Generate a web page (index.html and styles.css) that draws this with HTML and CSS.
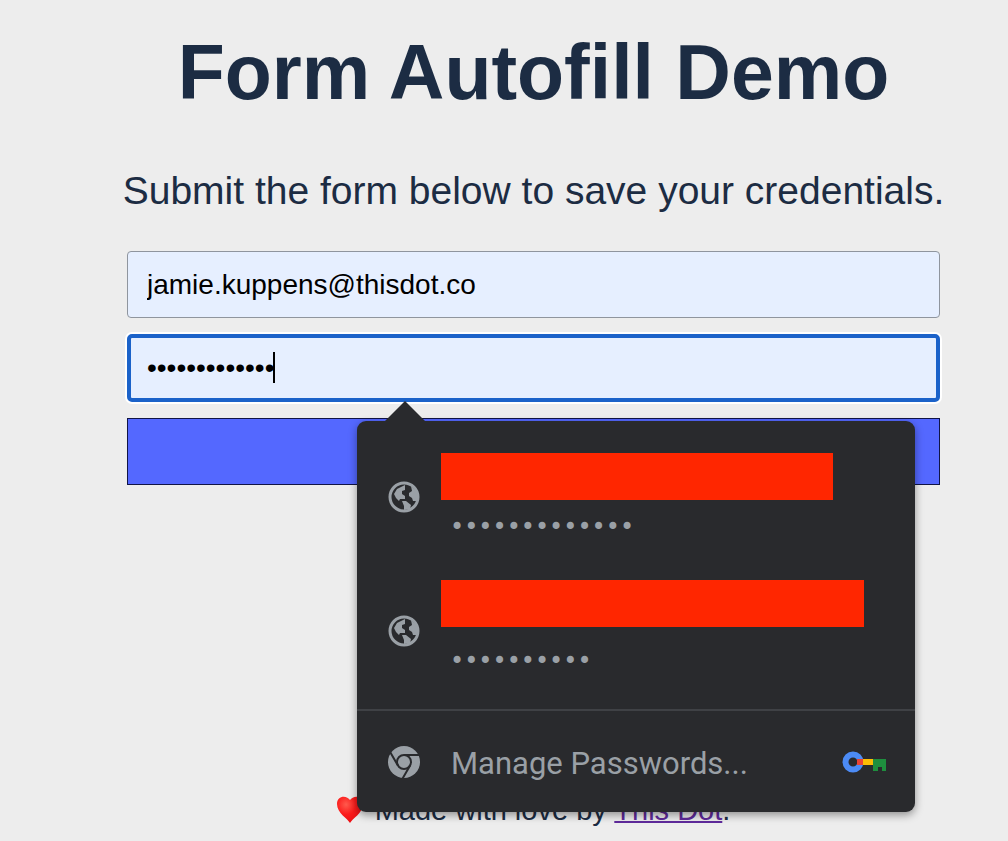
FILE: index.html
```html
<!DOCTYPE html>
<html lang="en">
<head>
<meta charset="utf-8" />
<meta name="viewport" content="width=device-width, initial-scale=1" />
<title>Form Autofill Demo</title>
<link rel="stylesheet" href="styles.css">
</head>
<body>
  <svg class="sprites" aria-hidden="true">
    <symbol id="globe" viewBox="0 0 32 32">
      <circle cx="16" cy="16" r="14" fill="none" stroke="currentColor" stroke-width="3" />
      <path fill="currentColor" d="M6 13 L9 8 L17 4 L17 9 L14 10 L14 13 L17 15 L17 18 L12 18 L11 20 L8 17 Z M23 5 L29 11 L29 20 L25 20 L24 17 L21 15 L21 12 L24 10 Z M14 20 L18 20 L23 24 L22 28 L16 29 L16 25 Z" />
    </symbol>
  </svg>

  <main>
    <h1>Form Autofill Demo</h1>
    <p class="intro">Submit the form below to save your credentials.</p>

    <form>
      <input class="field" type="email" value="jamie.kuppens@thisdot.co" aria-label="Email">
      <div class="password">
        <input class="field active" type="password" value="autofilldemo1" aria-label="Password">
        <span class="caret"></span>

        <div class="popup">
          <ul class="accounts">
            <li>
              <svg class="icon"><use href="#globe" /></svg>
              <div class="account">
                <span class="redacted"></span>
                <span class="dots">•••••••••••••</span>
              </div>
            </li>
            <li>
              <svg class="icon"><use href="#globe" /></svg>
              <div class="account second">
                <span class="redacted"></span>
                <span class="dots">••••••••••</span>
              </div>
            </li>
          </ul>
          <button class="manage" type="button">
            <svg class="icon" viewBox="0 0 32 32" aria-hidden="true">
              <circle cx="16" cy="16" r="16" fill="currentColor" />
              <g fill="none" stroke="#292a2d" stroke-width="2">
                <circle cx="16" cy="16" r="7" />
                <path d="M16 9 H31 M9.900 19.500 L2.400 6.500 M22.100 19.500 L14.600 32.500" />
              </g>
            </svg>
            <span>Manage Passwords...</span>
            <svg class="key" viewBox="0 0 44 22" aria-hidden="true">
              <circle cx="11" cy="11" r="7.500" fill="none" stroke="#4c8bf5" stroke-width="6" />
              <path fill="#ea4335" d="M15 8 h6 v6 h-6 z" />
              <path fill="#fbbc04" d="M21 8 h10 v6 h-10 z" />
              <path fill="#1e8e3e" d="M31 8 h13 v12 h-4 v-4 h-4 v4 h-5 z" />
            </svg>
          </button>
        </div>
      </div>
      <button class="submit" type="submit">Submit</button>
    </form>

    <footer>
      <svg class="heart" viewBox="0 0 26 28" aria-hidden="true">
        <defs>
          <radialGradient id="shine" cx="0.35" cy="0.3" r="0.75">
            <stop offset="0" stop-color="#ff5a4d" />
            <stop offset="0.5" stop-color="#fb1b1b" />
            <stop offset="1" stop-color="#e80d12" />
          </radialGradient>
        </defs>
        <path fill="url(#shine)" d="M13 27 C11 23 0 17 0 8 C0 -1 10 -1 13 4 C16 -1 26 -1 26 8 C26 17 15 23 13 27 Z" />
      </svg>
      <span>Made with love by <a href="#">This Dot</a>.</span>
    </footer>
  </main>
</body>
</html>
```
FILE: styles.css
```css
* {
    box-sizing: border-box;
}

body {
    margin: 0;
    background: #ededed;
    color: #1c2c43;
    font-family: "Liberation Sans", Arial, sans-serif;
}

main {
    padding: 27px 68px 0 127px;
    text-align: center;
}

h1 {
    margin: 0;
    font-size: 77px;
    line-height: 90px;
}

.intro {
    margin: 50px -20px 36px;
    font-size: 39px;
    line-height: 48px;
}

form {
    display: flex;
    flex-direction: column;
    gap: 16px;
}

.field {
    display: block;
    width: 100%;
    height: 67px;
    padding: 0 19px;
    border: 1px solid #8f959e;
    border-radius: 4px;
    outline: none;
    background: #e6efff;
    color: #000;
    font-family: inherit;
    font-size: 28px;
}

.active {
    height: 68px;
    border: 4px solid #1b62c9;
    border-radius: 5px;
    padding: 0 16px;
    box-shadow: 0 0 0 2px #fff;
}

.password {
    position: relative;
}

.caret {
    position: absolute;
    top: 18px;
    left: 146px;
    width: 2px;
    height: 31px;
    background: #000;
}

.submit {
    height: 67px;
    border: 1px solid #101446;
    background: #5468ff;
    color: #fff;
    font-family: inherit;
    font-size: 28px;
}

.popup {
    position: absolute;
    z-index: 1;
    top: 87px;
    left: 230px;
    right: 25px;
    border-radius: 9px;
    background: #292a2d;
    color: #9aa0a6;
    box-shadow: 0 3px 8px rgba(0, 0, 0, 0.4);
}

.popup::before {
    content: "";
    position: absolute;
    bottom: 100%;
    left: 28px;
    border: 20px solid transparent;
    border-top: 0;
    border-bottom-color: #292a2d;
}

.accounts {
    margin: 0;
    padding: 9px 0 11px;
    list-style: none;
}

.accounts li {
    display: flex;
    align-items: center;
    height: 134px;
    padding-left: 31px;
}

.account {
    display: flex;
    flex-direction: column;
    align-items: flex-start;
    align-self: flex-end;
    gap: 12px;
    margin: 0 0 22px 21px;
}

.redacted {
    width: 392px;
    height: 47px;
    background: #ff2600;
}

.second {
    gap: 19px;
}

.second .redacted {
    width: 423px;
}

.dots {
    padding-left: 9px;
    font-family: "DejaVu Sans", sans-serif;
    font-size: 24px;
    line-height: 30px;
}

.icon {
    width: 32px;
    height: 32px;
}

.manage {
    display: flex;
    align-items: center;
    width: 100%;
    height: 103px;
    padding: 0 29px 0 31px;
    border: 0;
    border-top: 2px solid #3f4145;
    background: none;
    color: inherit;
    font-family: Roboto, sans-serif;
    font-size: 31px;
}

.manage span {
    margin-left: 31px;
    padding-top: 3px;
}

.key {
    width: 44px;
    height: 22px;
    margin-left: auto;
}

footer {
    display: flex;
    justify-content: center;
    align-items: center;
    gap: 12px;
    margin-top: 309px;
    font-size: 29px;
    line-height: 32px;
}

.heart {
    width: 26px;
    height: 28px;
}

a {
    color: #5f2a9b;
    text-decoration-thickness: 2px;
}

.sprites {
    position: absolute;
    width: 0;
    height: 0;
}
```
